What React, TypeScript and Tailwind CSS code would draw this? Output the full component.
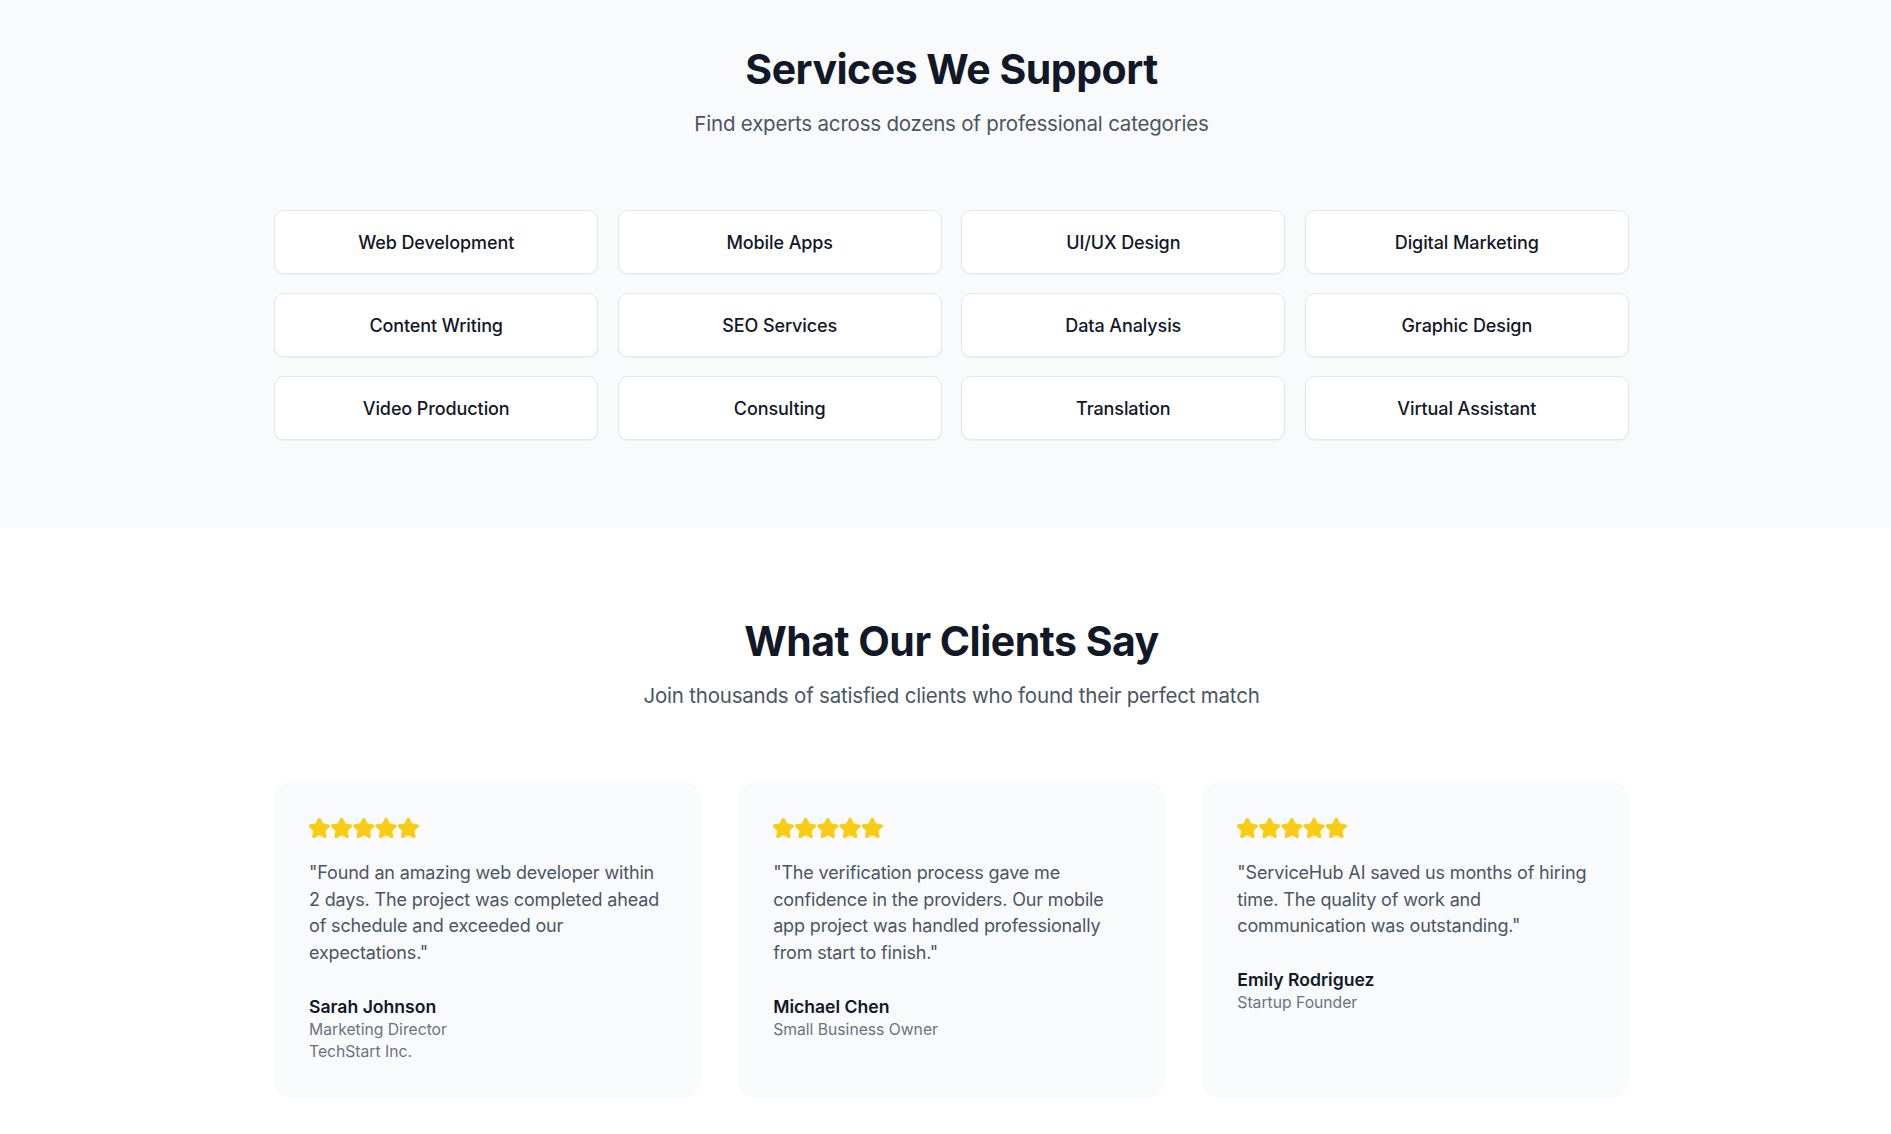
import React from "react";

const services = [
  "Web Development",
  "Mobile Apps",
  "UI/UX Design",
  "Digital Marketing",
  "Content Writing",
  "SEO Services",
  "Data Analysis",
  "Graphic Design",
  "Video Production",
  "Consulting",
  "Translation",
  "Virtual Assistant",
];

const testimonials = [
  {
    quote:
      '"Found an amazing web developer within 2 days. The project was completed ahead of schedule and exceeded our expectations."',
    name: "Sarah Johnson",
    role: ["Marketing Director", "TechStart Inc."],
  },
  {
    quote:
      '"The verification process gave me confidence in the providers. Our mobile app project was handled professionally from start to finish."',
    name: "Michael Chen",
    role: ["Small Business Owner"],
  },
  {
    quote:
      '"ServiceHub AI saved us months of hiring time. The quality of work and communication was outstanding."',
    name: "Emily Rodriguez",
    role: ["Startup Founder"],
  },
];

const STAR =
  "M11.525 2.295a.53.53 0 0 1 .95 0l2.31 4.679a2.123 2.123 0 0 0 1.595 1.16l5.166.756a.53.53 0 0 1 .294.904l-3.736 3.638a2.123 2.123 0 0 0-.611 1.878l.882 5.14a.53.53 0 0 1-.771.56l-4.618-2.428a2.122 2.122 0 0 0-1.973 0L6.396 21.01a.53.53 0 0 1-.77-.56l.881-5.139a2.122 2.122 0 0 0-.611-1.879L2.16 9.795a.53.53 0 0 1 .294-.906l5.165-.755a2.122 2.122 0 0 0 1.597-1.16z";

function Stars() {
  return (
    <svg width="111" height="20" viewBox="0 0 111 20" className="block">
      {[0, 1, 2, 3, 4].map((i) => (
        <path
          key={i}
          d={STAR}
          transform={`translate(${i * 22.25 - 1.256} -1.256) scale(0.966)`}
          fill="#FACC15"
          stroke="#FACC15"
          strokeWidth={2}
          strokeLinejoin="round"
        />
      ))}
    </svg>
  );
}

export default function App() {
  return (
    <div className="min-h-screen bg-white font-['Inter','Noto_Sans',sans-serif]">
      <section className="bg-[#f9fafb] pl-[12px] pt-[43px] pb-[88px]">
        <div className="mx-auto w-[1355px]">
          <h2 className="text-center text-[41px] leading-[52px] font-bold tracking-[-0.5px] text-[#111827]">
            Services We Support
          </h2>
          <p className="mt-[14px] text-center text-[20.5px] leading-[30px] tracking-[-0.2px] text-[#4b5563]">
            Find experts across dozens of professional categories
          </p>
          <div className="mt-[71px] grid grid-cols-4 gap-[19.2px]">
            {services.map((s) => (
              <div
                key={s}
                className="flex h-[64px] items-center justify-center rounded-[10px] border border-[#e5e7eb] bg-white text-[18px] tracking-[-0.1px] font-medium text-[#111827] shadow-[0_1px_2px_rgba(0,0,0,0.05)]"
              >
                {s}
              </div>
            ))}
          </div>
        </div>
      </section>

      <section className="bg-white pl-[12px] pt-[87px] pb-[88px]">
        <div className="mx-auto w-[1355px]">
          <h2 className="text-center text-[41px] leading-[52px] font-bold tracking-[-0.5px] text-[#111827]">
            What Our Clients Say
          </h2>
          <p className="mt-[14px] text-center text-[20.5px] leading-[30px] tracking-[-0.2px] text-[#4b5563]">
            Join thousands of satisfied clients who found their perfect match
          </p>
          <div className="mt-[70px] grid grid-cols-3 gap-[37.5px]">
            {testimonials.map((t) => (
              <div key={t.name} className="rounded-[19px] bg-[#f9fafb] px-[35px] pt-[37px] pb-[35px]">
                <Stars />
                <p className="mt-[21.5px] text-[18px] leading-[26.7px] tracking-[-0.15px] text-[#4b5563]">
                  {t.quote}
                </p>
                <div className="mt-[28px] text-[17.6px] leading-[24px] font-semibold text-[#111827]">
                  {t.name}
                </div>
                {t.role.map((r) => (
                  <div key={r} className="text-[15.7px] leading-[22px] text-[#6b7280]">
                    {r}
                  </div>
                ))}
              </div>
            ))}
          </div>
        </div>
      </section>
    </div>
  );
}
